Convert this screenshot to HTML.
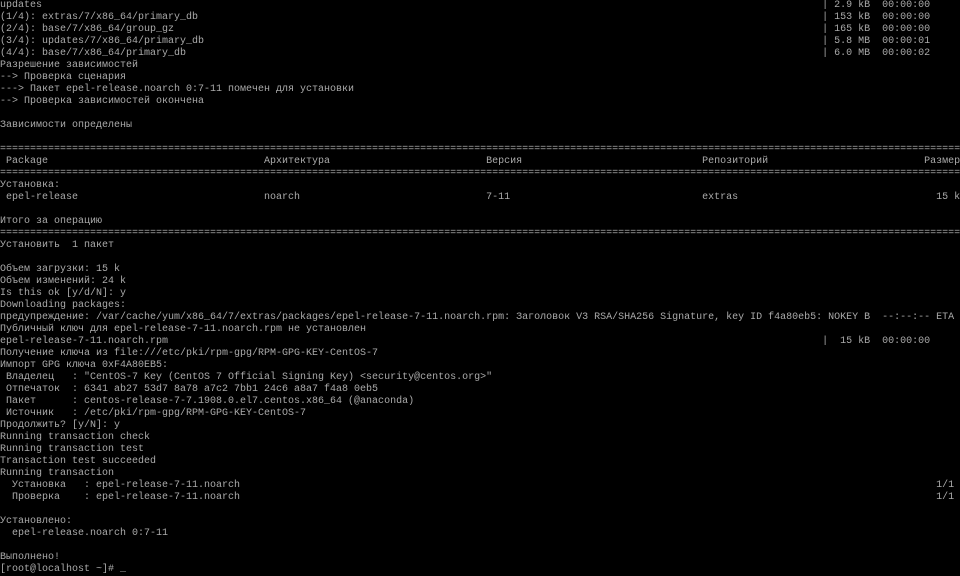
<!DOCTYPE html>
<html><head><meta charset="utf-8"><style>
html,body{margin:0;padding:0;background:#000;width:960px;height:576px;overflow:hidden}
pre{margin:0;font-family:"Liberation Mono","DejaVu Sans Mono",monospace;font-size:10px;line-height:12px;color:#aaaaaa;white-space:pre;letter-spacing:0}
</style></head><body><pre>updates                                                                                                                                  | 2.9 kB  00:00:00
(1/4): extras/7/x86_64/primary_db                                                                                                        | 153 kB  00:00:00
(2/4): base/7/x86_64/group_gz                                                                                                            | 165 kB  00:00:00
(3/4): updates/7/x86_64/primary_db                                                                                                       | 5.8 MB  00:00:01
(4/4): base/7/x86_64/primary_db                                                                                                          | 6.0 MB  00:00:02
Разрешение зависимостей
--> Проверка сценария
---> Пакет epel-release.noarch 0:7-11 помечен для установки
--> Проверка зависимостей окончена

Зависимости определены

================================================================================================================================================================
 Package                                    Архитектура                          Версия                              Репозиторий                          Размер
================================================================================================================================================================
Установка:
 epel-release                               noarch                               7-11                                extras                                 15 k

Итого за операцию
================================================================================================================================================================
Установить  1 пакет

Объем загрузки: 15 k
Объем изменений: 24 k
Is this ok [y/d/N]: y
Downloading packages:
предупреждение: /var/cache/yum/x86_64/7/extras/packages/epel-release-7-11.noarch.rpm: Заголовок V3 RSA/SHA256 Signature, key ID f4a80eb5: NOKEY B  --:--:-- ETA
Публичный ключ для epel-release-7-11.noarch.rpm не установлен
epel-release-7-11.noarch.rpm                                                                                                             |  15 kB  00:00:00
Получение ключа из file:///etc/pki/rpm-gpg/RPM-GPG-KEY-CentOS-7
Импорт GPG ключа 0xF4A80EB5:
 Владелец   : "CentOS-7 Key (CentOS 7 Official Signing Key) &lt;security@centos.org&gt;"
 Отпечаток  : 6341 ab27 53d7 8a78 a7c2 7bb1 24c6 a8a7 f4a8 0eb5
 Пакет      : centos-release-7-7.1908.0.el7.centos.x86_64 (@anaconda)
 Источник   : /etc/pki/rpm-gpg/RPM-GPG-KEY-CentOS-7
Продолжить? [y/N]: y
Running transaction check
Running transaction test
Transaction test succeeded
Running transaction
  Установка   : epel-release-7-11.noarch                                                                                                                    1/1
  Проверка    : epel-release-7-11.noarch                                                                                                                    1/1

Установлено:
  epel-release.noarch 0:7-11

Выполнено!
[root@localhost ~]# _</pre></body></html>
